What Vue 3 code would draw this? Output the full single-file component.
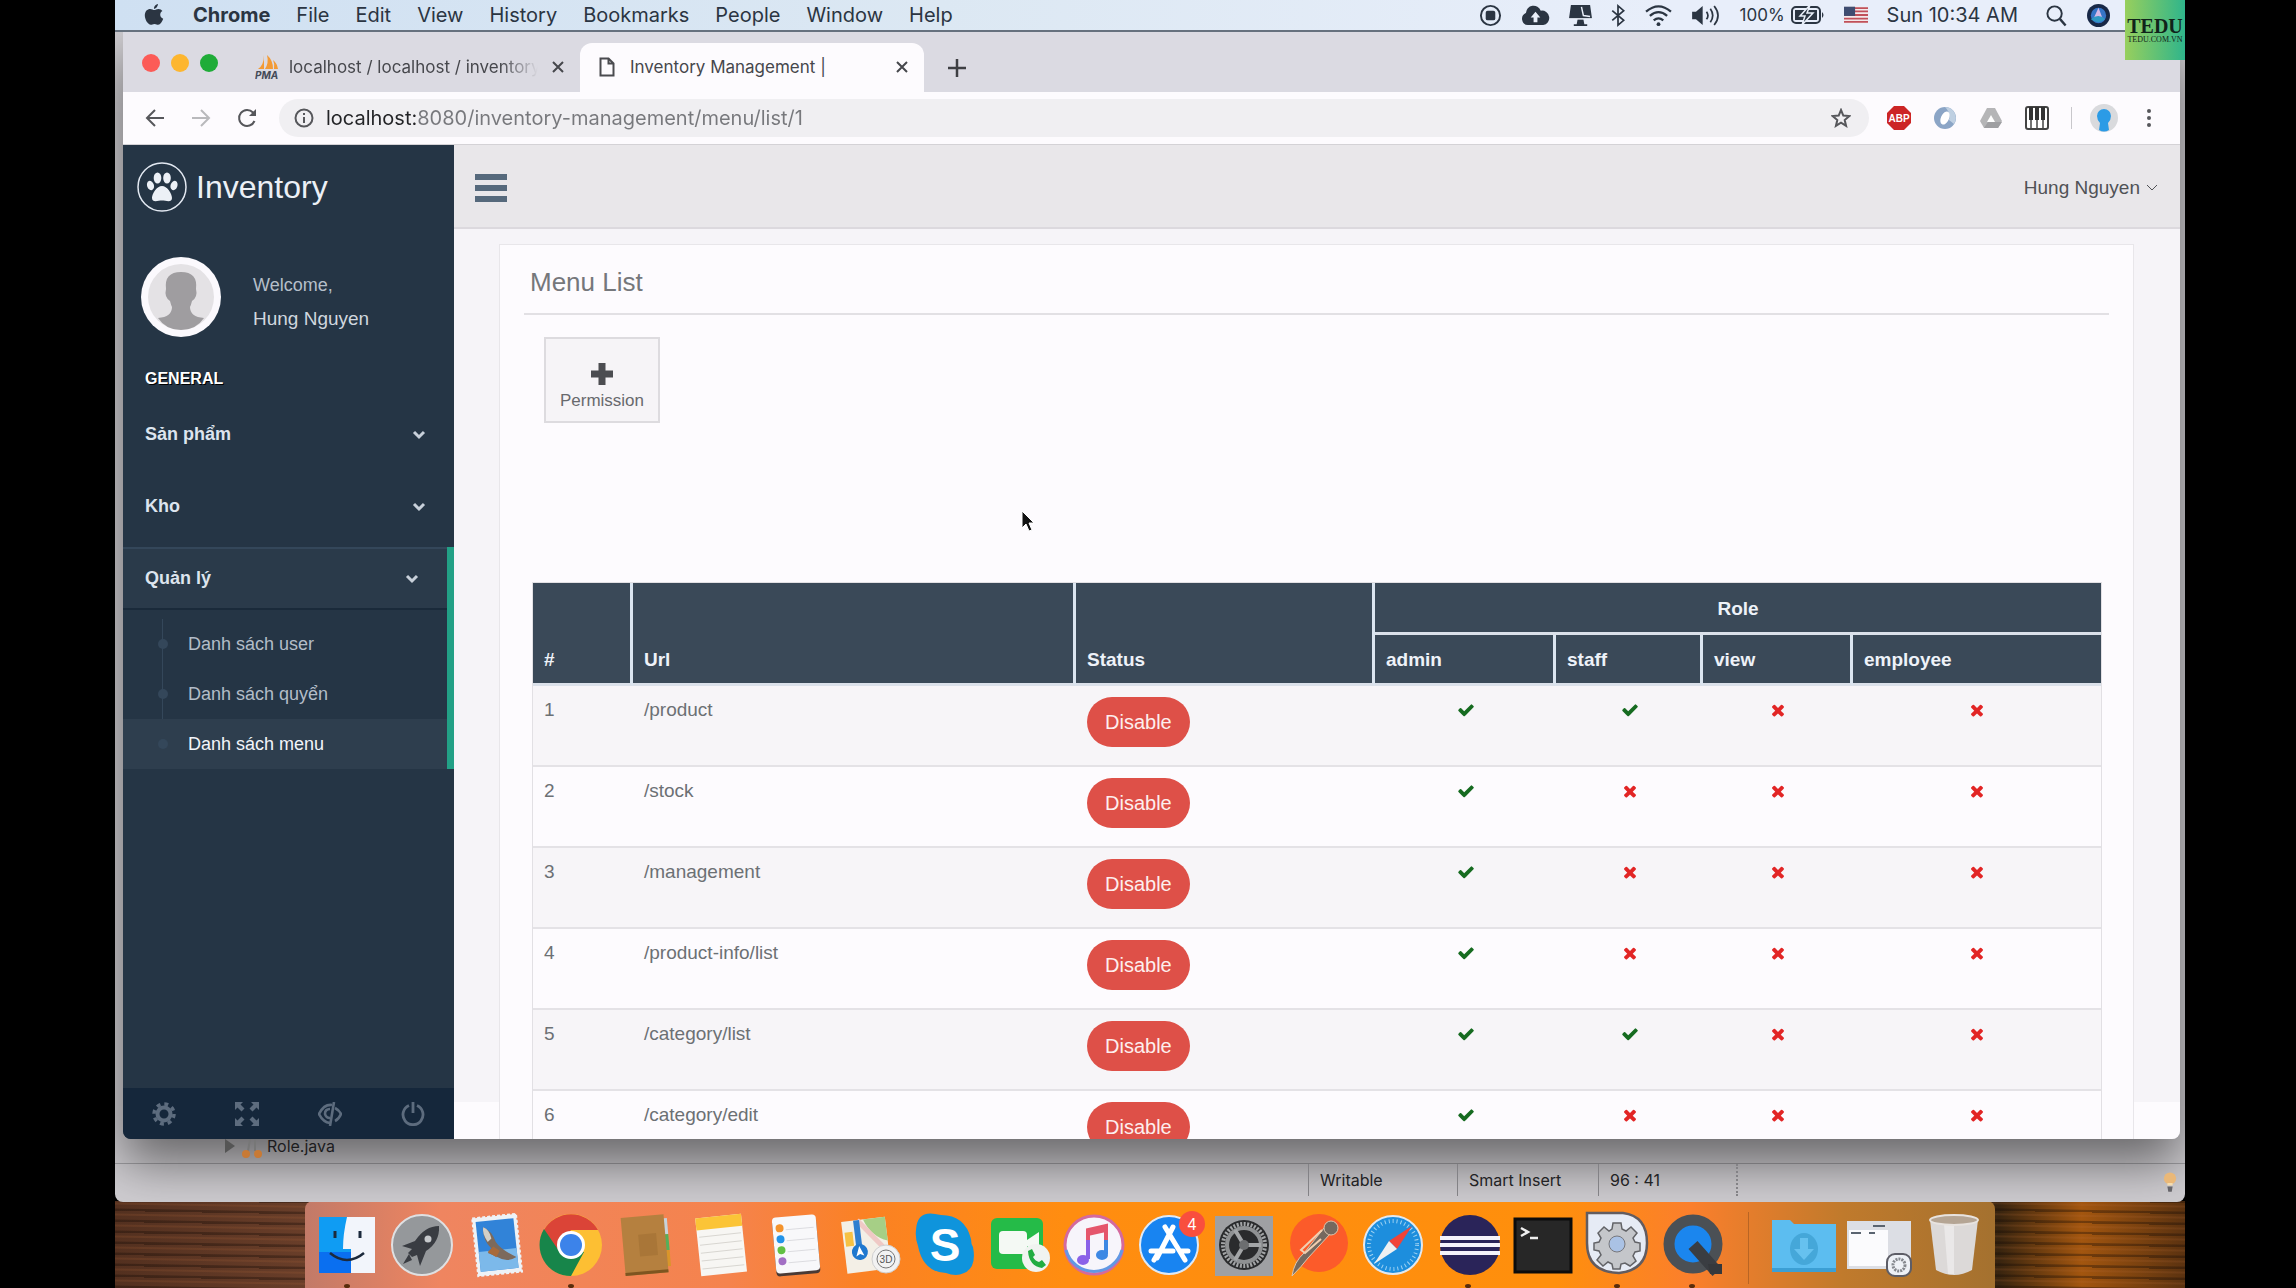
<template>
  <div class="desktop">
    <header class="menubar">
      <svg class="apple" viewBox="0 0 20 24"><path d="M14 1c0 2-2 5-4 4.800C9.800 3.500 12 1.200 14 1zM10.300 7c1 0 2.300-1.100 4.200-1.100 1.600 0 3 .8 3.900 2.100-3.300 2-2.700 6.400.8 7.700-.9 2.700-2.900 6-5 6-1.300 0-1.900-.8-3.700-.8s-2.500.8-3.700.8C4 21.700.8 16.800.8 12.300c0-4.200 2.700-6.400 5.300-6.400 1.800 0 3.200 1.100 4.200 1.100z"/></svg>
      <nav class="app-menu">
        <button v-for="(item, i) in appMenu" :key="item" :class="{ strong: i === 0 }">{{ item }}</button>
      </nav>
      <div class="tray">
        <svg viewBox="0 0 24 24"><circle cx="12" cy="12" r="10" fill="none" stroke="currentColor" stroke-width="2"/><rect x="7" y="7" width="10" height="10" rx="2"/></svg>
        <svg class="wide" viewBox="0 0 30 24"><path d="M7 22a6.500 6.500 0 0 1-2-12.500A8 8 0 0 1 20.500 7 7.600 7.600 0 0 1 23 22z"/><path d="M15 8l5 6h-3v5h-4v-5h-3z" fill="#e9eff9"/></svg>
        <svg viewBox="0 0 24 24"><path d="M2 1h20l2 14H0zM9 16h6l1 5h3v2H5v-2h3z"/><path d="M13 3l2 9 7 1M0 15.500h24" fill="none" stroke="#e9eff9" stroke-width="1.500"/></svg>
        <svg class="thin" viewBox="0 0 14 24"><path d="M1 7l12 10-6 5V2l6 5L1 17" fill="none" stroke="currentColor" stroke-width="1.800"/></svg>
        <svg class="wide" viewBox="0 0 30 24"><g fill="none" stroke="currentColor" stroke-width="2.400"><path d="M2 8q13-11 26 0M6 12.500q9-8 18 0M10 17q5-4 10 0"/></g><circle cx="15" cy="21" r="2"/></svg>
        <svg class="wide" viewBox="0 0 30 24"><path d="M0 8h4l7-6v20l-7-6H0z"/><path d="M15 8q3 4 0 8M19 5q5 7 0 14M23 2q8 10 0 20" fill="none" stroke="currentColor" stroke-width="1.800"/></svg>
        <span class="power">100%
          <svg class="battery" viewBox="0 0 34 20"><rect x="1" y="2" width="28" height="16" rx="4" fill="none" stroke="currentColor" stroke-width="2"/><rect x="4" y="5" width="22" height="10"/><path d="M31 7q3 3 0 6z"/><path d="M19 0L9 11h5l-3 9 11-12h-6z" stroke="#e9eff9" stroke-width="1.500"/></svg>
        </span>
        <svg class="flag" viewBox="0 0 26 18"><path fill="#f3e9ea" d="M0 0h26v18H0z"/><path d="M0 1.500h26M0 5h26M0 9h26M0 13h26M0 16.500h26" stroke="#c0505a" stroke-width="2"/><path fill="#3e4c70" d="M0 0h12v10H0z"/></svg>
        <span class="clock">Sun 10:34 AM</span>
        <svg viewBox="0 0 24 24"><circle cx="10" cy="10" r="7.500" fill="none" stroke="currentColor" stroke-width="2"/><path d="M15.500 15.500l6 7" stroke="currentColor" stroke-width="2.500"/></svg>
        <svg viewBox="0 0 24 24"><circle cx="12" cy="12" r="12" fill="#182847"/><circle cx="12" cy="12" r="8" fill="#3674c7"/><path d="M12 4l5 13-5-4-6 4z" fill="#d6b9e7"/><path d="M4 16q8-7 15 0-7 6-15 0" fill="#3098c3"/></svg>
      </div>
      <div class="watermark"><b>TEDU</b><small>TEDU.COM.VN</small></div>
    </header>

    <div class="ide">
      <section class="browser">
        <div class="tabstrip">
          <div class="lights"><i class="red"></i><i class="yellow"></i><i class="green"></i></div>
          <div class="tab">
            <svg class="pma" viewBox="0 0 24 26"><path d="M3 15q6-4 6-14v14zM10 15q4-6 2-14 6 5 6 14zM19 15q1-5-1-9 4 3 5 9z" fill="#f39a34"/><text x="0" y="25" font-size="10" font-style="italic" font-weight="bold" fill="#444b58">PMA</text></svg>
            <span class="tab-title faded">localhost / localhost / inventory</span>
            <button aria-label="Close tab"><svg class="cross" viewBox="0 0 12 12"><path d="M1 1l10 10M11 1L1 11"/></svg></button>
          </div>
          <div class="tab active">
            <svg class="doc" viewBox="0 0 16 20"><path d="M1.500 1.500h8l5 5v12h-13zM9.500 1.500v5h5" fill="none" stroke="#4a4b4f" stroke-width="2"/></svg>
            <span class="tab-title">Inventory Management |</span>
            <button aria-label="Close tab"><svg class="cross" viewBox="0 0 12 12"><path d="M1 1l10 10M11 1L1 11"/></svg></button>
          </div>
          <button class="new-tab" aria-label="New tab"><svg viewBox="0 0 18 18"><path d="M9 0v18M0 9h18" stroke="#3e3f43" stroke-width="2.500"/></svg></button>
        </div>

        <div class="toolbar">
          <button aria-label="Back"><svg viewBox="0 0 20 20"><path d="M19 10H2M10 2l-8 8 8 8"/></svg></button>
          <button aria-label="Forward" class="off"><svg viewBox="0 0 20 20"><path d="M1 10h17M10 2l8 8-8 8"/></svg></button>
          <button aria-label="Reload"><svg viewBox="0 0 20 20"><path d="M17.500 13A8 8 0 1 1 16 4.500L18 7"/><path d="M19 1v7h-7z" fill="#56575b" stroke="none"/></svg></button>
          <div class="omnibox">
            <svg viewBox="0 0 20 20"><circle cx="10" cy="10" r="8.500"/><path d="M10 9v6M10 5v2"/></svg>
            <input v-model="url" type="text" aria-label="Address">
            <button aria-label="Bookmark"><svg viewBox="0 0 20 20"><path d="M10 2l2.300 5.600 6 .5-4.600 3.900 1.400 5.900-5.100-3.200-5.100 3.200L6.300 12 1.700 8.100l6-.5z"/></svg></button>
          </div>
          <div class="extensions">
            <svg class="solid" viewBox="0 0 24 24"><path d="M7 0h10l7 7v10l-7 7H7l-7-7V7z" fill="#cc2525"/><text x="12" y="16" text-anchor="middle" font-size="10" font-weight="bold" fill="#fff">ABP</text></svg>
            <svg class="solid" viewBox="0 0 24 24"><circle cx="12" cy="12" r="11" fill="#8ba5c6"/><path d="M12 1a11 11 0 0 1 9 17l-5-4q2-7-4-13" fill="#bfd0e2"/><ellipse cx="12" cy="12" rx="4" ry="7" fill="#fff" transform="rotate(25 12 12)"/></svg>
            <svg class="solid" viewBox="0 0 24 24"><path d="M8 2h8l7 13-4 7H5l-4-7z" fill="#b5b5b7"/><path d="M12 9l4 7H8z" fill="#fff"/><path d="M5 22l4-6h14l-4 6z" fill="#9f9fa2"/></svg>
            <svg class="solid" viewBox="0 0 24 24"><rect x="1" y="1" width="22" height="22" rx="2" fill="#fff" stroke="#444" stroke-width="2"/><path d="M4 1h4v13H4zM10 1h4v13h-4zM16 1h4v13h-4z" fill="#333"/><path d="M6 14v9M12 14v9M18 14v9" stroke="#444" stroke-width="1.500"/></svg>
            <i class="rule"></i>
            <svg class="solid face" viewBox="0 0 28 28"><circle cx="14" cy="14" r="14" fill="#d9dadd"/><path d="M7 12a7 7 0 0 1 14 0q0 4-3 7l1 7q-5 3-10 0l1-7q-3-3-3-7" fill="#2b9be6"/></svg>
            <button aria-label="More"><svg class="solid dots" viewBox="0 0 6 20"><circle cx="3" cy="3" r="2"/><circle cx="3" cy="10" r="2"/><circle cx="3" cy="17" r="2"/></svg></button>
          </div>
        </div>

        <div class="page">
          <aside class="sidebar">
            <a href="#" class="brand">
              <svg viewBox="0 0 50 50"><circle cx="25" cy="25" r="24" fill="none" stroke="#e3e9f2" stroke-width="1.500"/><g fill="#ecf0f6"><ellipse cx="20.500" cy="16" rx="3.800" ry="5.500"/><ellipse cx="30" cy="16" rx="3.800" ry="5.500"/><ellipse cx="13.500" cy="23.500" rx="3.400" ry="4.800" transform="rotate(-20 13.500 23.500)"/><ellipse cx="37" cy="23.500" rx="3.400" ry="4.800" transform="rotate(20 37 23.500)"/><path d="M25 24c5 0 10 7.500 10 12 0 5-6 2.500-10 2.500S15 41 15 36c0-4.500 5-12 10-12z"/></g></svg>
              <span>Inventory</span>
            </a>
            <div class="profile">
              <svg viewBox="0 0 80 80"><circle cx="40" cy="40" r="40" fill="#fbf9fd"/><circle cx="40" cy="40" r="33" fill="#e4e2e5"/><path d="M25 32q-2-17 15-17t15 17q2 8-4 12-1 4-2 6 0 10 14 11-8 12-23 12T17 61q14-1 14-11-1-2-2-6-6-4-4-12" fill="#9f9da0"/></svg>
              <div class="profile-info">
                <span class="welcome">Welcome,</span>
                <span class="user">Hung Nguyen</span>
              </div>
            </div>
            <h3>GENERAL</h3>
            <ul class="side-menu">
              <li v-for="group in groups" :key="group.title" :class="{ active: group.children }">
                <a href="#" class="group">{{ group.title }}
                  <svg class="chevron" viewBox="0 0 14 10"><path d="M2 2l5 5 5-5"/></svg>
                </a>
                <ul v-if="group.children" class="child-menu">
                  <li v-for="child in group.children" :key="child" :class="{ current: child === currentMenu }">
                    <a href="#" @click.prevent="currentMenu = child">{{ child }}</a>
                  </li>
                </ul>
              </li>
            </ul>
            <div class="side-footer">
              <button aria-label="Settings"><svg viewBox="0 0 24 24"><circle cx="12" cy="12" r="6.500" fill="none" stroke="currentColor" stroke-width="4"/><circle cx="12" cy="12" r="10" fill="none" stroke="currentColor" stroke-width="3.500" stroke-dasharray="3.930 3.930"/></svg></button>
              <button aria-label="Full screen"><svg viewBox="0 0 24 24"><path d="M0 0h8L5.500 2.500l4 4-3 3-4-4L0 8zM24 0v8l-2.500-2.500-4 4-3-3 4-4L16 0zM0 24v-8l2.500 2.500 4-4 3 3-4 4L8 24zM24 24h-8l2.500-2.500-4-4 3-3 4 4L24 16z"/></svg></button>
              <button aria-label="Lock"><svg viewBox="0 0 24 24"><path d="M14 3Q6 2 1 12q4 8 11 9M17 6q4 2 6 6-2 5-6 7" fill="none" stroke="currentColor" stroke-width="2.600"/><path d="M16 0l-4 24M12 7q-5 0-5 5 1 4 5 4" fill="none" stroke="currentColor" stroke-width="2.600"/></svg></button>
              <button aria-label="Logout"><svg viewBox="0 0 24 24"><path d="M8 3.500a10 10 0 1 0 8 0M12 0v11" fill="none" stroke="currentColor" stroke-width="2.800"/></svg></button>
            </div>
          </aside>

          <main>
            <div class="topnav">
              <button aria-label="Toggle menu"><svg class="bars" viewBox="0 0 34 28"><path d="M1 3h32M1 14h32M1 25h32"/></svg></button>
              <a href="#" class="account">Hung Nguyen
                <svg viewBox="0 0 12 8"><path d="M1 1l5 5 5-5"/></svg>
              </a>
            </div>
            <div class="content">
              <div class="panel">
                <h2>Menu List</h2>
                <div class="panel-body">
                  <button class="permission">
                    <svg viewBox="0 0 24 24"><path d="M8.500 1h7v7.500H23v7h-7.500V23h-7v-7.500H1v-7h7.500z"/></svg>
                    Permission
                  </button>
                  <table>
                    <colgroup>
                      <col class="c-no"><col><col class="c-status"><col class="c-admin"><col class="c-staff"><col class="c-view"><col class="c-employee">
                    </colgroup>
                    <thead>
                      <tr>
                        <th rowspan="2">#</th>
                        <th rowspan="2">Url</th>
                        <th rowspan="2">Status</th>
                        <th :colspan="roles.length" class="role">Role</th>
                      </tr>
                      <tr>
                        <th v-for="role in roles" :key="role">{{ role }}</th>
                      </tr>
                    </thead>
                    <tbody>
                      <tr v-for="(row, index) in rows" :key="row.url">
                        <td>{{ index + 1 }}</td>
                        <td>{{ row.url }}</td>
                        <td><button class="disable">Disable</button></td>
                        <td v-for="(role, r) in roles" :key="role" class="mark">
                          <svg v-if="row.auth[r]" class="yes" viewBox="0 0 1792 1792"><path :d="checkPath"/></svg>
                          <svg v-else class="no" viewBox="0 0 1792 1792"><path :d="timesPath"/></svg>
                        </td>
                      </tr>
                    </tbody>
                  </table>
                </div>
              </div>
            </div>
          </main>
        </div>
      </section>

      <div class="tree">
        <svg viewBox="0 0 10 14"><path d="M0 0l10 7-10 7z" fill="#555"/></svg>
        <svg class="java" viewBox="0 0 22 20"><path d="M7 12L9 0M14 0v12" fill="none" stroke="#777" stroke-width="2"/><circle cx="5" cy="15" r="4" fill="#c87a35"/><circle cx="17" cy="15" r="4" fill="#c87a35"/></svg>
        <span>Role.java</span>
      </div>
      <footer class="statusbar">
        <span class="writable">Writable</span>
        <span class="insert">Smart Insert</span>
        <span class="position">96 : 41</span>
        <svg viewBox="0 0 16 24"><circle cx="8" cy="8" r="7" fill="#eab878"/><path d="M5 13h6v3H5z" fill="#f5dcae"/><path d="M5 17h6l-1 6H6z" fill="#66656a"/></svg>
      </footer>
    </div>

    <div class="wallpaper">
      <ul class="dock">
        <li class="running"><svg viewBox="0 0 64 64"><path d="M4 5h56v56H4z" fill="#f2f5fb"/><path d="M4 5h28q-4 17-4 32h8v24H4z" fill="#0f9cf3"/><path d="M4 40h32v21H4z" fill="#0a6ff0"/><path d="M20 19v7M45 19v7" stroke="#1c2a3c" stroke-width="3"/><path d="M15 41q17 14 34 0" fill="none" stroke="#1c2a3c" stroke-width="2.500"/></svg></li>
        <li><svg viewBox="0 0 64 64"><circle cx="32" cy="33" r="30" fill="#95989b" stroke="#dfe0e2" stroke-width="2"/><path d="M49 14q-14 0-24 15l-13 5 10 3-4 4 4 4 5-2 3 11 6-15q14-9 13-25z" fill="#393c42"/><circle cx="38" cy="27" r="3.500" fill="#c6c9cc"/><path d="M19 42l-6 10 9-4z" fill="#393c42"/></svg></li>
        <li><svg viewBox="0 0 64 64"><g transform="rotate(-6 32 32)"><path d="M10 4h44v58H10z" fill="#eef2f6" stroke="#eef2f6" stroke-width="2" stroke-dasharray="3 2"/><path d="M13 8h38v50H13z" fill="#3183d8"/><path d="M13 38h38v20H13z" fill="#7cb9ea"/><path d="M20 14q8 4 11 16 4 8 19 17-10 5-19-2l-9-5 4-4q-8-9-6-22" fill="#7c6a5c"/><path d="M20 14q6 3 7 12l-4 3q-5-9-3-15" fill="#d4d0c8"/><path d="M22 39l6-5 6 5-4 6z" fill="#a86a3a"/></g></svg></li>
        <li class="running"><svg viewBox="0 0 64 64"><circle cx="32" cy="33" r="31" fill="#fdbf33"/><path d="M5 18A31 31 0 0 1 59 18H32L18 38z" fill="#db4437"/><path d="M5 17a31 31 0 0 0 27 47l13-24-25-1z" fill="#17854a"/><circle cx="32" cy="33" r="14" fill="#fff"/><circle cx="32" cy="33" r="11" fill="#3c83ea"/></svg></li>
        <li><svg viewBox="0 0 64 64"><g transform="rotate(-5 32 32)"><path d="M50 8h5v16h-5z" fill="#c7d3dc"/><path d="M50 24h5v16h-5z" fill="#54b05a"/><path d="M50 40h5v16h-5z" fill="#d9962a"/><path d="M9 4h43v58H9z" fill="#b5803f"/><path d="M9 59h43v3H9z" fill="#7e5520"/><path d="M25 22h18v22H25z" fill="#a97638"/></g></svg></li>
        <li><svg viewBox="0 0 64 64"><g transform="rotate(-6 32 32)"><path d="M9 4h46v58H9z" fill="#f7f6f3"/><path d="M9 4h46v12H9z" fill="#fbc437"/><path d="M11 23h42M11 31h42M11 39h42M11 47h42M11 55h42" stroke="#d8d6d1"/></g></svg></li>
        <li><svg viewBox="0 0 64 64"><g transform="rotate(-5 32 32)"><rect x="11" y="6" width="44" height="57" rx="4" fill="#4a3a35"/><rect x="11" y="4" width="44" height="56" rx="4" fill="#f8f8fa"/><path d="M24 17h28M24 28h28M24 39h28M24 50h28" stroke="#dcdce0"/><circle cx="18" cy="15" r="4" fill="#f4932c"/><circle cx="18" cy="26" r="4" fill="#2293e8"/><circle cx="18" cy="37" r="4" fill="#62c043"/><circle cx="18" cy="48" r="4" fill="#a26fc4"/></g></svg></li>
        <li><svg viewBox="0 0 64 64"><g transform="rotate(-7 30 32)"><path d="M6 7h44v52H6z" fill="#f3efe6"/><path d="M28 7h22v24q-16-6-22-24" fill="#a6cf86"/><path d="M8 18h8v14H8z" fill="#f6c143"/><path d="M22 7l26 34" stroke="#efc9c5" stroke-width="5"/><path d="M21 7v34" stroke="#2f7fd0" stroke-width="6"/><circle cx="21" cy="39" r="8" fill="#1f78cf"/><path d="M21 33l4 10-4-2-4 2z" fill="#fff"/></g><circle cx="48" cy="47" r="14" fill="#f2f2f2" stroke="#cfcfcf"/><circle cx="48" cy="47" r="9" fill="none" stroke="#777"/><text x="48" y="51" text-anchor="middle" font-size="10" fill="#555">3D</text></svg></li>
        <li><svg viewBox="0 0 64 64"><path d="M3 18Q4-1 22 2l6 1q24 0 30 24 0 5 2 8 5 26-17 28-5 0-10-2Q10 60 5 34 2 26 3 18z" fill="#0f94dc"/><text x="32" y="49" text-anchor="middle" font-size="46" font-weight="bold" fill="#fff">S</text></svg></li>
        <li><svg viewBox="0 0 64 64"><rect x="3" y="6" width="52" height="51" rx="6" fill="#25bb48"/><rect x="11" y="19" width="28" height="23" rx="4" fill="#f4f9f4"/><path d="M39 28l12-8v22l-12-8z" fill="#f4f9f4"/><circle cx="48" cy="46" r="14" fill="#f0f3f0"/><path d="M40 39l4-2 3 6-2 2q2 4 6 5l3-2 4 5-4 3q-13-2-14-17" fill="#22ad41"/></svg></li>
        <li><svg viewBox="0 0 64 64"><circle cx="32" cy="33" r="29" fill="#f7f5fb" stroke="#d46a9d" stroke-width="3"/><path d="M4 38a29 29 0 0 0 56 0" fill="none" stroke="#6298e4" stroke-width="3"/><path d="M26 47V18l18-4v27" fill="none" stroke="#e5566c" stroke-width="4"/><path d="M26 18l18-4v6l-18 4z" fill="#e5566c"/><path d="M26 28v19" stroke="#8a61e8" stroke-width="4"/><path d="M44 28v14" stroke="#3d88e4" stroke-width="4"/><ellipse cx="21" cy="48" rx="6" ry="5" fill="#8a61e8"/><ellipse cx="40" cy="43" rx="6" ry="5" fill="#3d88e4"/></svg></li>
        <li><svg viewBox="0 0 64 64"><circle cx="32" cy="33" r="29" fill="#1884f1" stroke="#dfe9f5" stroke-width="2"/><path d="M36 15L20 46M28 15l20 33M14 39h22M43 39h8M20 43l-3 5" stroke="#fff" stroke-width="5" stroke-linecap="round"/><circle cx="55" cy="12" r="13" fill="#f94f3e"/><text x="55" y="18" text-anchor="middle" font-size="16" fill="#fff">4</text></svg></li>
        <li><svg viewBox="0 0 64 64"><path d="M3 4h58v60H3z" fill="#9fa0a3"/><circle cx="32" cy="33" r="25" fill="#2a2b2d"/><circle cx="32" cy="33" r="21" fill="none" stroke="#a3a5a7" stroke-width="4" stroke-dasharray="2 1.500"/><circle cx="32" cy="33" r="17" fill="none" stroke="#8f9193" stroke-width="4"/><path d="M32 33h17M32 33l-9-15M32 33l-9 15" stroke="#a3a5a7" stroke-width="4"/><circle cx="32" cy="33" r="5" fill="#6c6e70"/></svg></li>
        <li><svg viewBox="0 0 64 64"><circle cx="33" cy="31" r="29" fill="#fc5b2a"/><g stroke="#dcc6ae" fill="#75695f"><path d="M38 16l6 6-22 24q-6 8-16 18 2-14 12-23z"/><circle cx="45" cy="16" r="7"/></g><path d="M36 18L15 38l4 3 16-14" fill="none" stroke="#f1cfb0" stroke-width="2"/></svg></li>
        <li><svg viewBox="0 0 64 64"><circle cx="32" cy="33" r="29" fill="#1d8edd" stroke="#e3e8ed" stroke-width="2"/><circle cx="32" cy="33" r="24" fill="none" stroke="#9ed2f2" stroke-width="4" stroke-dasharray="1 3"/><path d="M51 14L36 37l-8-8z" fill="#f04438"/><path d="M13 52l15-23 8 8z" fill="#eef0f2"/></svg></li>
        <li class="running"><svg viewBox="0 0 64 64"><circle cx="34" cy="33" r="30" fill="#2a2459"/><path d="M4 26h60M4 33h60M4 41h60" stroke="#f5f3fa" stroke-width="4"/></svg></li>
        <li><svg viewBox="0 0 64 64"><path d="M5 7h56v53H5z" fill="#272727" stroke="#0c0c0c" stroke-width="3"/><path d="M11 16l7 4-7 4M20 26h8" fill="none" stroke="#eee" stroke-width="2.500"/></svg></li>
        <li class="running"><svg viewBox="0 0 64 64"><path d="M2 1h36q24 3 24 30t-28 30Q2 60 2 31z" fill="#e6ebf5" stroke="#625c60" stroke-width="2.500"/><path d="M28 11h8l1 6 4 2 5-4 6 6-4 5 2 4 5 1v8l-5 1-2 4 3 5-6 5-5-3-4 1-1 5h-7l-1-5-4-2-5 4-6-6 4-5-2-4-5-1v-7l5-1 2-4-3-5 6-6 5 4 3-2z" fill="#c4c6ca" stroke="#626367" stroke-width="1.500"/><circle cx="32" cy="32" r="8" fill="#aac2e5" stroke="#77777c"/></svg></li>
        <li class="running"><svg viewBox="0 0 64 64"><circle cx="33" cy="32" r="24" fill="#1b86ee" stroke="#4b5055" stroke-width="11"/><path d="M33 33l24 27" stroke="#3a3d42" stroke-width="12"/><path d="M48 52h14v10H50z" fill="#35383c"/></svg></li>
        <li class="separator"></li>
        <li><svg viewBox="0 0 64 64"><path d="M0 8h18l4 4h42v48H0z" fill="#5cbdf0"/><path d="M0 56h64v4H0z" fill="#3c9fd4"/><ellipse cx="32" cy="37" rx="14" ry="16" fill="#45a7d9"/><path d="M28 26h8v11h6L32 48 22 37h6z" fill="#66c1ef"/></svg></li>
        <li><svg viewBox="0 0 64 64"><path d="M0 9h64v48H0z" fill="#dcdee4"/><path d="M2 18h39v36H2z" fill="#fbfbfd"/><path d="M26 14h12M4 21h10M22 21h6" stroke="#5a6470" stroke-width="2"/><rect x="40" y="42" width="24" height="22" rx="8" fill="#eef1f6" stroke="#5d5d66" stroke-width="2"/><circle cx="52" cy="53" r="6" fill="none" stroke="#85888e" stroke-width="3" stroke-dasharray="2 1"/></svg></li>
        <li><svg viewBox="0 0 64 64"><path d="M8 8h48l-6 50q-18 10-36 0z" fill="#dcd9d8"/><path d="M22 12h10v50h-6z" fill="#eae8e8"/><ellipse cx="32" cy="8" rx="24" ry="5" fill="#b5a594" stroke="#e8e3df" stroke-width="2"/></svg></li>
      </ul>
    </div>

    <svg class="cursor" viewBox="0 0 14 22"><path d="M1 1v17l4-4 3 7 3-1-3-7h5z" fill="#111" stroke="#fff"/></svg>
  </div>
</template>

<script setup>
import { ref } from 'vue'

const appMenu = ['Chrome', 'File', 'Edit', 'View', 'History', 'Bookmarks', 'People', 'Window', 'Help']

const url = ref('localhost:8080/inventory-management/menu/list/1')

const currentMenu = ref('Danh sách menu')

const groups = [
  { title: 'Sản phẩm' },
  { title: 'Kho' },
  { title: 'Quản lý', children: ['Danh sách user', 'Danh sách quyển', 'Danh sách menu'] }
]

const roles = ['admin', 'staff', 'view', 'employee']

// auth follows the order of roles
const rows = [
  { url: '/product', auth: [1, 1, 0, 0] },
  { url: '/stock', auth: [1, 0, 0, 0] },
  { url: '/management', auth: [1, 0, 0, 0] },
  { url: '/product-info/list', auth: [1, 0, 0, 0] },
  { url: '/category/list', auth: [1, 1, 0, 0] },
  { url: '/category/edit', auth: [1, 0, 0, 0] }
]

const checkPath = 'M1671 566q0 40-28 68l-724 724-136 136q-28 28-68 28t-68-28l-136-136-362-362q-28-28-28-68t28-68l136-136q28-28 68-28t68 28l294 295 656-657q28-28 68-28t68 28l136 136q28 28 28 68z'
const timesPath = 'M1490 1322q0 40-28 68l-136 136q-28 28-68 28t-68-28l-294-294-294 294q-28 28-68 28t-68-28l-136-136q-28-28-28-68t28-68l294-294-294-294q-28-28-28-68t28-68l136-136q28-28 68-28t68 28l294 294 294-294q28-28 68-28t68 28l136 136q28 28 28 68t-28 68l-294 294 294 294q28 28 28 68z'
</script>

<style>
  body{
    margin: 0;
    background: #000;
  }
</style>

<style scoped>
  *{
    box-sizing: border-box;
  }
  ul, h2, h3{
    margin: 0;
    padding: 0;
    list-style: none;
  }
  button{
    font: inherit;
    color: inherit;
    background: none;
    border: 0;
    padding: 0;
    cursor: pointer;
  }
  a{
    color: inherit;
    text-decoration: none;
  }
  svg{
    display: block;
    flex: none;
  }
  .desktop{
    position: relative;
    display: flex;
    flex-direction: column;
    height: 100vh;
    padding: 0 111px 0 115px;
    overflow: hidden;
    background: #000;
    font-family: "Liberation Sans", Arial, sans-serif;
    font-size: 19px;
    color: #6c7074;
  }

  /* menu bar */
  .menubar{
    flex: none;
    display: flex;
    align-items: center;
    height: 32px;
    padding-left: 29px;
    border-bottom: 2px solid #66717e;
    background: linear-gradient(90deg, #cfe0f2, #dce8f3 40%, #e8eefa 75%);
    color: #2b3542;
    font-family: Inter, sans-serif;
    font-size: 20px;
    line-height: 30px;
    white-space: nowrap;
  }
  .apple{
    width: 20px;
    height: 24px;
    fill: #2b3542;
  }
  .app-menu{
    display: flex;
    gap: 26px;
    margin-left: 29px;
  }
  .strong{
    font-weight: 700;
  }
  .tray{
    display: flex;
    align-items: center;
    gap: 19px;
    margin-left: auto;
    margin-right: 15px;
  }
  .tray svg{
    width: 23px;
    height: 23px;
    fill: currentColor;
  }
  .tray .wide{
    width: 29px;
  }
  .tray .thin{
    width: 14px;
  }
  .clock{
    margin-right: 8px;
  }
  .power{
    display: flex;
    align-items: center;
    gap: 6px;
    font-size: 17px;
  }
  .tray .battery{
    width: 34px;
    height: 20px;
  }
  .tray .flag{
    width: 24px;
    height: 18px;
  }
  .watermark{
    position: relative;
    z-index: 3;
    align-self: flex-start;
    display: flex;
    flex: none;
    flex-direction: column;
    align-items: center;
    justify-content: center;
    width: 60px;
    height: 60px;
    background: linear-gradient(90deg, #98cf5d, #2fb58b);
    color: #10231a;
    font-family: "Liberation Serif", serif;
    line-height: 1;
  }
  .watermark b{
    font-size: 20px;
  }
  .watermark small{
    font-size: 8px;
  }

  /* browser */
  .ide{
    flex: 1;
    min-height: 0;
    display: flex;
    flex-direction: column;
    overflow: hidden;
    border-radius: 0 0 8px 8px;
    background: #cfcdd1;
    position: relative;
    z-index: 1;
  }
  .browser{
    position: relative;
    flex: 1;
    min-height: 0;
    display: flex;
    flex-direction: column;
    margin: 0 5px 0 8px;
    border-radius: 0 0 8px 8px;
    box-shadow: 0 24px 50px rgba(0, 0, 0, .5);
  }
  .tabstrip{
    flex: none;
    display: flex;
    height: 60px;
    background: #dbdae2;
    font-family: Inter, sans-serif;
    font-size: 17px;
    color: #46474c;
  }
  .lights{
    display: flex;
    gap: 11px;
    padding: 22px 0 0 19px;
  }
  .lights i{
    width: 18px;
    height: 18px;
    border-radius: 50%;
  }
  .red{ background: #fc5b57; }
  .yellow{ background: #fdb62f; }
  .green{ background: #1fac38; }
  .tab{
    display: flex;
    align-items: center;
    width: 344px;
    height: 49px;
    margin-top: 11px;
    padding: 0 16px 1px 19px;
  }
  .tab.active{
    border-radius: 12px 12px 0 0;
    background: #fdfbfe;
  }
  .lights + .tab{
    margin-left: 18px;
  }
  .tab-title{
    flex: 1;
    min-width: 0;
    margin: 0 14px 0 10px;
    overflow: hidden;
    white-space: nowrap;
  }
  .active .tab-title{
    margin-left: 15px;
  }
  .faded{
    mask-image: linear-gradient(90deg, #000 85%, transparent);
  }
  .pma{
    width: 24px;
    height: 26px;
  }
  .doc{
    width: 16px;
    height: 20px;
  }
  .cross{
    width: 12px;
    height: 12px;
    stroke: #46474c;
    stroke-width: 2;
  }
  .new-tab{
    margin-left: 24px;
  }
  .new-tab svg{
    width: 18px;
    height: 18px;
    margin-top: 12px;
  }
  .toolbar{
    flex: none;
    display: flex;
    align-items: center;
    gap: 26px;
    height: 53px;
    padding: 0 28px 0 22px;
    background: #fdfbfe;
    border-bottom: 1px solid #d4d2d6;
  }
  .toolbar svg{
    width: 20px;
    height: 20px;
    fill: none;
    stroke: #56575b;
    stroke-width: 2;
  }
  .toolbar .off svg{
    stroke: #b9b9bc;
  }
  .omnibox{
    flex: 1;
    display: flex;
    align-items: center;
    height: 38px;
    margin-left: -4px;
    padding: 0 18px 0 15px;
    border-radius: 19px;
    background: #f0eff2;
  }
  .omnibox input{
    flex: 1;
    border: 0;
    padding: 0;
    margin-left: 12px;
    outline: 0;
    background: linear-gradient(90deg, #222326 90px, #77787c 90px);
    -webkit-background-clip: text;
    background-clip: text;
    color: transparent;
    font: 20px Inter, sans-serif;
  }
  .extensions{
    display: flex;
    align-items: center;
    gap: 22px;
    margin-left: -8px;
  }
  .toolbar .solid{
    width: 24px;
    height: 24px;
    stroke: none;
  }
  .toolbar .face{
    width: 28px;
    height: 28px;
    margin-left: -4px;
  }
  .toolbar .dots{
    width: 6px;
    height: 20px;
    margin-left: 6px;
    fill: #56575b;
  }
  .rule{
    width: 1px;
    height: 22px;
    background: #c8c7cb;
  }

  /* page */
  .page{
    flex: 1;
    min-height: 0;
    display: flex;
    overflow: hidden;
    border-radius: 0 0 8px 8px;
  }
  .sidebar{
    flex: none;
    display: flex;
    flex-direction: column;
    width: 331px;
    background: #253545;
    color: #dde4ee;
  }
  .brand{
    display: flex;
    align-items: center;
    gap: 9px;
    height: 84px;
    padding-left: 14px;
    font-size: 32px;
    color: #ecf0f6;
  }
  .brand svg{
    width: 50px;
    height: 50px;
  }
  .profile{
    display: flex;
    align-items: center;
    gap: 32px;
    padding: 28px 0 0 18px;
  }
  .profile svg{
    width: 80px;
    height: 80px;
  }
  .profile-info{
    padding-top: 10px;
  }
  .profile span{
    display: block;
    line-height: 34px;
  }
  .welcome{
    font-size: 18px;
    color: #b5bfc9;
  }
  .user{
    color: #d0d7df;
  }
  h3{
    padding: 30px 0 12px 22px;
    font-size: 16px;
    line-height: 24px;
    color: #fff;
    text-shadow: 1px 1px #000;
  }
  .side-menu > li{
    padding-bottom: 9px;
  }
  .side-menu > .active{
    padding-bottom: 0;
    border-right: 7px solid #22a086;
  }
  .group{
    display: flex;
    align-items: center;
    justify-content: space-between;
    height: 63px;
    padding: 0 28px 0 22px;
    font-size: 18px;
    font-weight: 700;
  }
  .active .group{
    border-top: 2px solid #34475a;
    border-bottom: 2px solid #1a2a3a;
    background: #2a3a4a;
  }
  .chevron{
    width: 14px;
    height: 10px;
    fill: none;
    stroke: #c8d0da;
    stroke-width: 3;
  }
  .child-menu{
    padding-top: 9px;
  }
  .child-menu li{
    display: flex;
    align-items: center;
    height: 50px;
    padding-left: 35px;
    font-size: 18px;
    color: #b3bdc8;
    background: linear-gradient(#34475a, #34475a) 39px 0 / 1px 100% no-repeat;
  }
  .child-menu li::before{
    content: "";
    width: 10px;
    height: 10px;
    margin-right: 20px;
    border-radius: 50%;
    background: #34475a;
  }
  .child-menu .current{
    background: #2e3e4e;
    color: #f2f5fa;
  }
  .side-footer{
    display: flex;
    height: 51px;
    margin-top: auto;
    background: #15273b;
    color: #5d6c7e;
  }
  .side-footer button{
    flex: 1;
    display: flex;
    align-items: center;
    justify-content: center;
  }
  .side-footer svg{
    width: 24px;
    height: 24px;
    fill: currentColor;
  }
  main{
    flex: 1;
    min-width: 0;
    display: flex;
    flex-direction: column;
    background: linear-gradient(to top, #fdfbfe 37px, #f6f4f8 37px);
  }
  .topnav{
    flex: none;
    display: flex;
    align-items: center;
    justify-content: space-between;
    height: 84px;
    padding: 3px 22px 0 20px;
    border-bottom: 2px solid #dcd9de;
    background: #e9e7ea;
  }
  .bars{
    width: 34px;
    height: 28px;
    stroke: #56697c;
    stroke-width: 6;
  }
  .account{
    display: flex;
    align-items: center;
    gap: 6px;
    color: #505256;
  }
  .account svg{
    width: 12px;
    height: 8px;
    fill: none;
    stroke: #505256;
    stroke-width: 1;
  }
  .content{
    flex: 1;
    min-height: 0;
    padding: 15px 46px 0 45px;
  }
  .panel{
    padding: 0 24px;
    border: 1px solid #e8e6ea;
    background: #fdfbfe;
  }
  h2{
    padding: 21px 6px 15px;
    border-bottom: 2px solid #e2e0e4;
    font-size: 26px;
    font-weight: 400;
    line-height: 32px;
    color: #75777b;
  }
  .panel-body{
    padding: 22px 7px 0 8px;
  }
  .permission{
    display: flex;
    flex-direction: column;
    align-items: center;
    gap: 5px;
    width: 116px;
    height: 86px;
    margin: 0 0 159px 12px;
    padding-top: 23px;
    border: 2px solid #dddbdf;
    background: #f6f4f7;
    font-size: 17px;
    color: #68696d;
  }
  .permission svg{
    width: 24px;
    height: 24px;
    fill: #4c4d51;
  }
  table{
    width: 100%;
    table-layout: fixed;
    border-collapse: separate;
    border-spacing: 0;
    border: 1px solid #e2e0e4;
  }
  .c-no{ width: 100px; }
  .c-status{ width: 299px; }
  .c-admin{ width: 181px; }
  .c-staff{ width: 147px; }
  .c-view{ width: 150px; }
  .c-employee{ width: 248px; }
  th{
    height: 51px;
    padding: 0 11px 10px;
    border-right: 3px solid #dbe5f0;
    border-bottom: 3px solid #dbe1ea;
    background: #3a4958;
    color: #eef2f8;
    line-height: 26px;
    text-align: left;
    vertical-align: bottom;
  }
  tr th:last-child{
    border-right: 0;
  }
  .role{
    height: 52px;
    text-align: center;
  }
  td{
    height: 81px;
    padding: 11px;
    border-bottom: 2px solid #e4e2e6;
    line-height: 26px;
    vertical-align: top;
  }
  tbody tr:nth-child(odd){
    background: #f7f5f8;
  }
  .disable{
    display: block;
    height: 50px;
    padding: 0 18px;
    border-radius: 25px;
    background: #de5048;
    color: #fdeeee;
    font-size: 20px;
  }
  .mark svg{
    width: 18px;
    height: 18px;
    margin: 4px auto;
  }
  .yes{ fill: #166b20; }
  .no{ fill: #e22525; }

  /* editor window behind the browser */
  .tree{
    flex: none;
    display: flex;
    align-items: flex-start;
    height: 25px;
    padding-left: 110px;
    border-bottom: 1px solid #a09fa3;
    font-family: Inter, sans-serif;
    font-size: 16px;
    line-height: 14px;
    color: #1c1c1e;
  }
  .tree svg{
    position: relative;
    width: 10px;
    height: 14px;
  }
  .tree .java{
    width: 22px;
    height: 20px;
    margin: 0 4px 0 6px;
  }
  .tree span{
    position: relative;
  }
  .statusbar{
    flex: none;
    position: relative;
    display: flex;
    justify-content: flex-end;
    align-items: flex-start;
    height: 38px;
    padding-right: 8px;
    font-family: Inter, sans-serif;
    font-size: 16px;
    line-height: 32px;
    color: #222224;
  }
  .statusbar span{
    padding-left: 11px;
    border-left: 1px solid #838286;
  }
  .writable{ width: 149px; }
  .insert{ width: 141px; }
  .position{
    width: 140px;
    margin-right: 425px;
    border-right: 2px dotted #838286;
  }
  .statusbar svg{
    width: 14px;
    height: 24px;
    margin-top: 6px;
  }

  /* dock */
  .wallpaper{
    flex: none;
    height: 87px;
    margin-top: -1px;
    background:
      repeating-linear-gradient(1deg, rgba(20, 10, 5, .35) 0 2px, transparent 3px 6px, rgba(190, 110, 60, .15) 7px 8px, transparent 9px 11px),
      linear-gradient(90deg, #53301f, #6b3f2a 10%, #5d3a20 85%, #38240f 91%, #a3560f 95%, #5b3210);
  }
  .dock{
    display: flex;
    height: 87px;
    margin: 0 190px;
    padding: 11px 4px 0 5px;
    border-radius: 8px 8px 0 0;
    background: linear-gradient(90deg, #c27a68, #ef8560 8%, #f5834d 25%, #fb8124 33%, #ff8d10 45%, #ff8f0c 74%, #fb7f2c 82%, #c07a2c 91%, #a4712f);
    overflow: hidden;
  }
  .dock li{
    flex: 1;
    display: flex;
    flex-direction: column;
    align-items: center;
    gap: 8px;
  }
  .dock svg{
    width: 64px;
    height: 64px;
    overflow: visible;
  }
  .dock .running::after{
    content: "";
    width: 6px;
    height: 6px;
    border-radius: 50%;
    background: #5a2d0c;
  }
  .dock .separator{
    flex: none;
    width: 38px;
  }
  .separator::before{
    content: "";
    width: 1px;
    height: 72px;
    background: #b96524;
  }
  .cursor{
    position: absolute;
    z-index: 4;
    left: 1021px;
    top: 509px;
    width: 14px;
    height: 24px;
  }
</style>
